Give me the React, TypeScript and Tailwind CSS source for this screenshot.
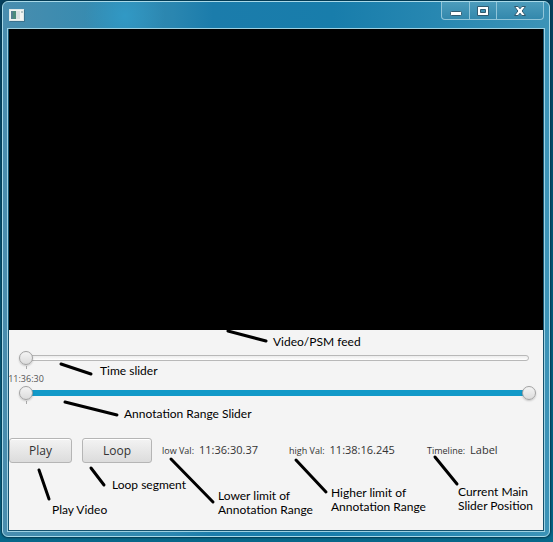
import React from "react";

const notes = [
  { text: ["Video/PSM feed"], place: "left-[264px] top-[5px]" },
  { text: ["Time slider"], place: "left-[91px] top-[34px]" },
  { text: ["Annotation Range Slider"], place: "left-[115px] top-[77px]" },
  { text: ["Loop segment"], place: "left-[103px] top-[148px]" },
  { text: ["Play Video"], place: "left-[43px] top-[173px]" },
  { text: ["Lower limit of", "Annotation Range"], place: "left-[209px] top-[159px]" },
  { text: ["Higher limit of", "Annotation Range"], place: "left-[322px] top-[156px]" },
  { text: ["Current Main", "Slider Position"], place: "left-[449px] top-[155px]" },
];

const pointers = [
  "M219 1L257 11",
  "M52 34L82 44",
  "M56 72L108 85",
  "M30 140L40 169",
  "M82 138L95 155",
  "M162 129L204 172",
  "M287 130L317 162",
  "M426 127L448 154",
];

const rangeClass =
  "pointer-events-none absolute inset-0 m-0 h-4 w-full appearance-none bg-transparent outline-none [&::-webkit-slider-thumb]:pointer-events-auto [&::-webkit-slider-thumb]:size-[14px] [&::-webkit-slider-thumb]:appearance-none [&::-webkit-slider-thumb]:rounded-full [&::-webkit-slider-thumb]:border [&::-webkit-slider-thumb]:border-[#a2a2a2] [&::-webkit-slider-thumb]:bg-linear-to-b [&::-webkit-slider-thumb]:from-[#f4f4f4] [&::-webkit-slider-thumb]:to-[#dcdcdc] [&::-webkit-slider-thumb]:shadow-[0_1px_2px_#0003]";

const buttonClass =
  "h-[25px] rounded-[3px] border border-[#b5b5b5] bg-linear-to-b from-[#f3f3f3] to-[#dcdcdc] text-xs text-[#333] shadow-[inset_0_1px_0_#fff]";

const captionButton = "flex items-center justify-center";

function TitleBar() {
  return (
    <header className="flex h-[26px] items-start justify-between pl-[2px]">
      <svg className="mt-[7px]" width="16" height="13" viewBox="0 0 16 13" aria-hidden="true">
        <rect x="0.5" y="0.5" width="14" height="11" fill="#f2f4f2" stroke="#dfe9e9" />
        <path d="M1 12.5H15.5V1" fill="none" stroke="#35627a" strokeOpacity="0.6" />
        <rect x="2" y="2" width="5" height="8" fill="#4d8c7c" />
        <rect x="2" y="2" width="2" height="8" fill="#557f91" />
        <rect x="7" y="2" width="4" height="8" fill="#dce2e3" />
        <rect x="12" y="2" width="2" height="2" fill="#b7c5c6" />
      </svg>
      <div className="mr-[1px] flex h-[18px] w-[103px] divide-x divide-[#91c5d9] overflow-hidden rounded-b-[4px] border border-t-0 border-[#91c5d9] bg-linear-to-b from-[#4c9cbc] to-[#3388ac]">
        <button type="button" aria-label="Minimize" className={`${captionButton} w-[28px]`}>
          <svg width="14" height="14" viewBox="0 0 14 14">
            <rect x="1.5" y="7.5" width="11" height="4" rx="1" fill="#fff" stroke="#315b70" />
          </svg>
        </button>
        <button type="button" aria-label="Maximize" className={`${captionButton} w-[27px]`}>
          <svg width="14" height="14" viewBox="0 0 14 14">
            <path d="M1.5 2.5H12.5V11.5H1.5ZM4.5 5.5V8.5H9.5V5.5Z" fillRule="evenodd" fill="#fff" stroke="#315b70" />
          </svg>
        </button>
        <button type="button" aria-label="Close" className={`${captionButton} flex-1`}>
          <svg width="14" height="14" viewBox="0 0 14 14">
            <path
              d="M1.5 2.5H5.2L7 4.8L8.8 2.5H12.5L9.1 7L12.5 11.5H8.8L7 9.2L5.2 11.5H1.5L4.9 7Z"
              fill="#fff"
              stroke="#315b70"
            />
          </svg>
        </button>
      </div>
    </header>
  );
}

function Sliders() {
  return (
    <div className="pt-5 pr-[7px] pl-[10px]">
      <div className="relative flex h-4 items-center px-[3px]">
        <div className="mr-1 h-[6px] flex-1 rounded-full border border-[#b8b8b8] bg-linear-to-b from-[#ececec] to-white" />
        <input type="range" aria-label="Time" defaultValue={0} className={rangeClass} />
      </div>
      <div className="-ml-[11px] h-[19px] w-9">
        <div className="mx-auto h-[3px] w-px bg-[#aaa]" />
        <div className="pt-1 text-center text-[9px] leading-3 text-[#555]">11:36:30</div>
      </div>
      <div className="relative flex h-4 items-center px-[7px]">
        <div className="h-[6px] flex-1 bg-[#1299c8]" />
        <input type="range" aria-label="Range start" defaultValue={0} className={rangeClass} />
        <input type="range" aria-label="Range end" defaultValue={100} className={rangeClass} />
      </div>
      <div className="ml-[7px] h-[3px] w-px bg-[#aaa]" />
    </div>
  );
}

function Reading({ label, value, width }: { label: string; value: string; width: string }) {
  return (
    <div className={`flex shrink-0 items-center gap-[5px] whitespace-nowrap text-[#333] ${width}`}>
      <span className="text-[9px]">{label}</span>
      <output className="text-[11px]">{value}</output>
    </div>
  );
}

export default function App() {
  return (
    <div className="flex min-h-screen bg-linear-to-b from-[#07415f] via-[#075b7b] to-[#07688a] pt-[1px] pr-[3px] pb-[5px] pl-[2px] font-['Open_Sans','Noto_Sans',sans-serif]">
      <main className="flex flex-1 flex-col rounded-[6px] border border-[#a8d9e8] bg-[radial-gradient(circle_at_122px_14px,#3199c5,transparent_40px),linear-gradient(90deg,#498dae,#378bb0_90px,#2a86b0_170px,#1b7cab_210px,#187dab_330px,#2787b1_430px,#3c93b7)] px-1 pb-1 shadow-[0_0_2px_1px_#04384f]">
        <TitleBar />
        <div className="flex flex-1 flex-col border border-[#9ed1e2]">
          <div className="flex flex-1 flex-col border border-t-0 border-[#15516d]">
            <section aria-label="Video" className="flex-1 bg-black" />
            <section className="relative bg-[#f4f4f4] pb-[67px]">
              <Sliders />
              <div className="flex items-center gap-[10px] pt-[34px]">
                <button type="button" className={`${buttonClass} w-[63px]`}>Play</button>
                <button type="button" className={`${buttonClass} w-[70px]`}>Loop</button>
                <div className="flex">
                  <Reading label="low Val:" value="11:36:30.37" width="w-[127px]" />
                  <Reading label="high Val:" value="11:38:16.245" width="w-[138px]" />
                  <Reading label="Timeline:" value="Label" width="w-[80px]" />
                </div>
              </div>
              <div className="pointer-events-none absolute inset-0">
                <svg className="size-full" fill="none" stroke="#000" strokeWidth="3" strokeLinecap="round" aria-hidden="true">
                  {pointers.map((d) => (
                    <path key={d} d={d} />
                  ))}
                </svg>
                {notes.map((note) => (
                  <p
                    key={note.place}
                    className={`absolute font-['Lato','Open_Sans',sans-serif] text-xs leading-[14px] whitespace-nowrap text-black ${note.place}`}
                  >
                    {note.text.map((line) => (
                      <span key={line} className="block">{line}</span>
                    ))}
                  </p>
                ))}
              </div>
            </section>
          </div>
        </div>
      </main>
    </div>
  );
}
